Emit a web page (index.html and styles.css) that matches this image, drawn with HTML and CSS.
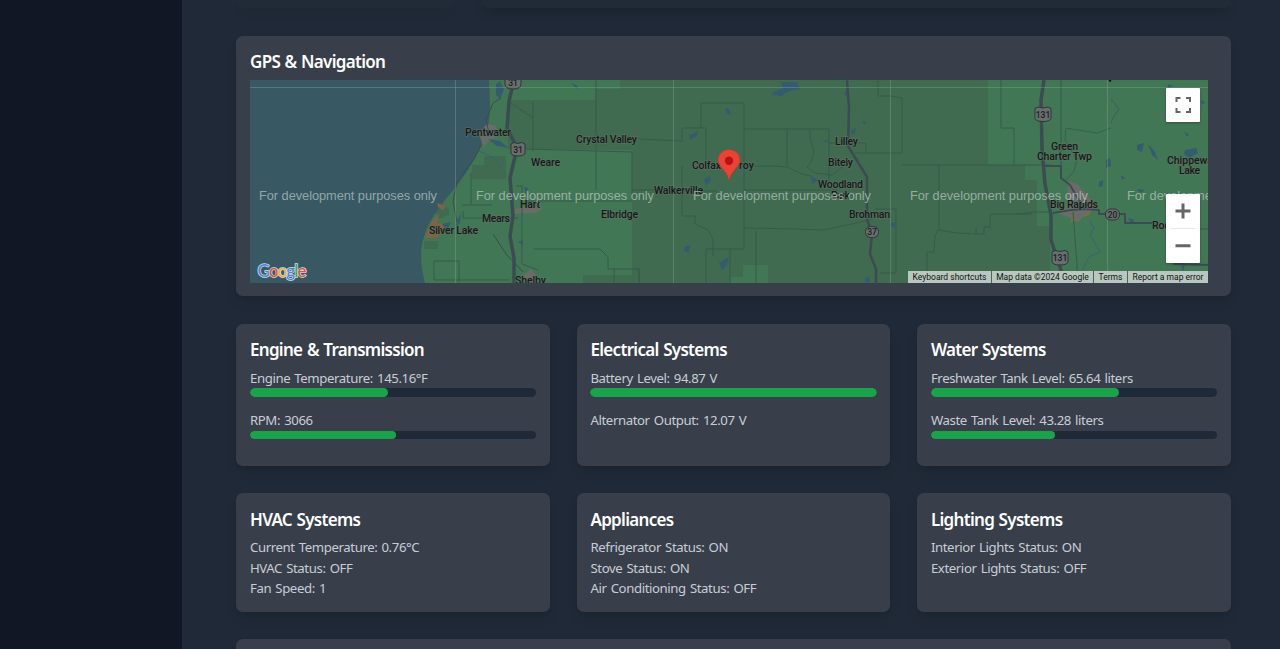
FILE: index.html
```html
<!DOCTYPE html>
<html lang="en">
<head>
<meta charset="utf-8">
<title>Vehicle Dashboard</title>
<link rel="stylesheet" href="styles.css">
</head>
<body>
<div class="app">
  <aside class="sidebar"></aside>
  <main class="main">
    <div class="top-row"><div class="stub dim"></div><div class="stub"></div></div>
    <section class="card gps">
      <h2>GPS &amp; Navigation</h2>
      <div class="map">
        <svg class="map-art" viewBox="250 80 958 203" width="958" height="203">
          <rect x="250" y="80" width="958" height="203" fill="#427755"/>
          <g fill="#406b50">
            <path d="M508 100H595V89H620V80H988V165H1025V180H1037V226H1050V283H583V275H632V150L508 149Z"/>
            <path d="M472 173V165H484V156H506V179H472ZM434 210l8-6 7 5v6l-10 4ZM424 241h14v8h-14z"/>
          </g>
          <path fill="#427755" d="M743 265H768V283H731V277H743Z"/>
          <path fill="#385963" d="M250 80H489C491 113 490 128 482 143C473 164 462 180 449 195C434 214 423 229 421 253Q421 269 425 283H250Z"/>
          <path fill="#806344" d="M437 203l9 3-3 4-5-3ZM425 238l6-16 8-8-2 9 10 2-10 13Z"/>
          <g fill="#6a6c69">
            <path d="M479 133l8-9 9 2 4 9-10 5-7 7ZM512 210l20-5 11 4-9 4-21 1ZM522 276l9-7 6 8v6h-12Z"/>
            <path d="M1068 181l9 3 9 10 11 14-10 5-9 9-10-5-11-4 10-6Z"/>
          </g>
          <path d="M1071 221l5-2m8-3l6-4" stroke="#7f6b4a" stroke-width="3"/>
          <g fill="#345c70">
            <path d="M496 84l4-3 4 8-4 10-4-4ZM488 139l12 2 9 7-12-2ZM571 83l7 3-1 3ZM773 92l10-4-2-6h16l3 7-10 2-9 5-9-1ZM689 136l9-5-1 5-7 4ZM704 179l6-3 1 5-5 5ZM725 107l4 2 2 6-4-1ZM719 263l6-4 4-2-2 8-5 5ZM685 247l5-2-1 8-5-2ZM457 221l4-8-1 10-4 4ZM442 224l9-2-4 9ZM518 242l5-2v5ZM524 187l4 1-2 6ZM846 90l4 2-3 5-3-3ZM851 130l5-2-1 5-4 2ZM862 121l4 1-2 3ZM821 142l7-2v2ZM811 176l8 4-7 4ZM891 223l4-1v6l-4-2ZM865 279l4-3 1 6-5 1Z"/>
            <path d="M1137 145l7-2-2 9-5-2ZM1148 144l7 8 3 8-6-5ZM1185 150l11-2 2 5-9 5-5-4ZM1106 160l4-2 1 8-5 2ZM1099 182l4-2v6l-4 1ZM1121 175l4 3-3 2ZM1137 189l8 1-5 3ZM1184 131l5 4-2 2ZM1128 218l7 2-4 4ZM1181 266l4-1-2 6ZM1075 277l8 1-4 3ZM1168 84l5 2-5 2ZM1201 100l4 2-3 3Z"/>
          </g>
          <g fill="none" stroke="#355c4a" stroke-width="1">
            <path d="M533 102V151M596 80V190M508 101l25 17M526 149l106 3M527 201H632V152M534 249h66l8 8v12h31v14M639 283v-14M614 269V283M522 186v78l16 6M523 186h-7M434 261V280H509M434 261h25v21M463 211V218H492M462 205h30M471 204V173M492 218h26"/>
            <path d="M638 139l44 2V128h24v38M682 166v50h13v8l13 6 5 9v17M682 191h35M632 190h54M701 128V103h43v146h-38v34M730 249v34M744 129h85M787 129v37M810 130v8l4 14-3 10-4 5 8 6 17 2 10-8M744 166h31l12 1 15 7 9 2M744 190h93M756 230V283M744 228l54 1 26 1 32-7 17-4M829 129v14h37v10M829 143v40M855 153h47V98l-11-2h-13V80M902 165h149M939 165v63l-4 8-1 16h-7v30M939 230l18 3 19 1v-6M875 209h21v64h-16M976 234h8v-7h6v-13h42M1001 80v48h13v38M1061 80v86"/>
            <path d="M1017 214l17-2h17M1073 212l4 52v19M1173 229h35"/>
          </g>
          <g fill="none" stroke="#386374">
            <path d="M1090 221l4 8-4 6 10 17-11 5-6 12-5 11"/>
            <path stroke="#37604f" d="M1066 180l8-9 3-12-12-19 1-12 12 2 19 3 14-5"/>
            <path stroke="#376060" d="M1111 123l2-5 6-9-8-10"/>
            <path d="M477 150l17 8 9 12"/>
          </g>
          <g fill="none" stroke="#3b4c50" stroke-linejoin="round">
            <path stroke-width="3.5" d="M514 80l-5 21-2 27 10 20-7 30 3 38-3 20 4 22v25"/>
            <path stroke-width="2.5" d="M847 80l2 28-1 38 19 31v42l5 15-2 20 6 15v14"/>
            <path stroke-width="3.5" d="M1044 80l-3 20 1 49 3 35 6 31v25l9 27 5 16"/>
            <path stroke-width="2" d="M1044 166h17v12l9 7 7 12 8 12 14 1v4h26v9h27M1053 213l18-3 15-1M1173 264l35 1"/>
            <path stroke-width="1" d="M489 133l-3-13 7-17 8-5M482 144l-8 15-17 23-4 20 4 20M493 234l13 20 17 18"/>
          </g>
          <path d="M250 87.500H1208M455.500 80V283M673.500 80V283M890.500 80V283M1107.500 80V283" fill="none" stroke="#87a794" stroke-opacity=".38"/>
          <g class="places">
            <text x="465" y="136" textLength="46">Pentwater</text>
            <text x="576" y="142.700" textLength="61">Crystal Valley</text>
            <text x="531" y="166.300" textLength="29">Weare</text>
            <text x="520" y="207.500" textLength="20">Hart</text>
            <text x="482" y="221.500" textLength="28">Mears</text>
            <text x="429" y="233.500" textLength="49">Silver Lake</text>
            <text x="515" y="283.500" textLength="31">Shelby</text>
            <text x="601" y="218" textLength="37">Elbridge</text>
            <text x="654" y="193.500" textLength="49">Walkerville</text>
            <text x="692" y="169" textLength="29">Colfax</text>
            <text x="739" y="169" textLength="15">roy</text>
            <text x="835" y="145.300" textLength="23">Lilley</text>
            <text x="828" y="166" textLength="25">Bitely</text>
            <text x="818" y="188.400" textLength="45">Woodland</text>
            <text x="831" y="198.500" textLength="19">Park</text>
            <text x="849" y="217.700" textLength="41">Brohman</text>
            <text x="1051" y="150" textLength="27">Green</text>
            <text x="1037" y="160" textLength="55">Charter Twp</text>
            <text x="1050" y="207.500" textLength="48">Big Rapids</text>
            <text x="1167" y="163.500" textLength="46">Chippewa</text>
            <text x="1179" y="173.500" textLength="21">Lake</text>
            <text x="1152" y="229" textLength="35">Rodney</text>
          </g>
          <path d="M1109 80l2 1" stroke="#111" stroke-width="2"/>
          <g class="shields">
            <path d="M505 78h16v6q0 5-8 5t-8-5z"/><text x="513" y="86">31</text>
            <path d="M511 144l3-1.500 4 1 4-1 3 1.500v9q-1 3-7 3t-7-3z"/><text x="518" y="153">31</text>
            <path d="M1035 108.500l3-1.500 5 1 5-1 3 1.500v10q-1 3-8 3t-8-3z"/><text x="1043" y="118">131</text>
            <path d="M1052 252l3-1.500 5 1 5-1 3 1.500v10q-1 3-8 3t-8-3z"/><text x="1060" y="261">131</text>
            <rect x="865.500" y="226.500" width="13" height="11" rx="5"/><text x="872" y="235">37</text>
            <rect x="1105.500" y="209" width="14" height="11" rx="5"/><text x="1112.500" y="218">20</text>
          </g>
          <g class="watermark">
            <text x="259" y="200" textLength="178">For development purposes only</text>
            <text x="476" y="200" textLength="178">For development purposes only</text>
            <text x="693" y="200" textLength="178">For development purposes only</text>
            <text x="910" y="200" textLength="178">For development purposes only</text>
            <text x="1127" y="200" textLength="178">For development purposes only</text>
          </g>
          <path d="M729 181c-1-6-4-9-7-13-2.500-3-4-5-4-8a11 10.500 0 0 1 22 0c0 3-1.500 5-4 8-3 4-6 7-7 13z" fill="#ea4335" stroke="#c5332a" stroke-width=".6"/>
          <circle cx="729" cy="160.700" r="4.200" fill="#b31412"/>
          <text class="google" x="257.500" y="276.500" textLength="49"><tspan fill="#4a86e0">G</tspan><tspan fill="#dd5144">o</tspan><tspan fill="#e5b53c">o</tspan><tspan fill="#4a86e0">g</tspan><tspan fill="#43a35b">l</tspan><tspan fill="#dd5144">e</tspan></text>
        </svg>
        <div class="control full"><svg width="34" height="34" viewBox="0 0 34 34" fill="none" stroke="#666" stroke-width="2"><path d="M10.500 14v-4h4M20 10h4v4M24 20v4h-4M14.500 24h-4v-4"/></svg></div>
        <div class="control zoom"><svg width="34" height="69" viewBox="0 0 34 69"><path d="M9.500 17h15M17 9.500v15M9.500 51.800h15" stroke="#666" stroke-width="3"/><path d="M4.500 34.500h25" stroke="#e6e6e6"/></svg></div>
        <div class="credits"><span style="width:83px">Keyboard shortcuts</span><span style="width:102px">Map data ©2024 Google</span><span style="width:34px">Terms</span><span style="width:81px">Report a map error</span></div>
      </div>
    </section>
    <div class="grid">
      <section class="card">
        <h2>Engine &amp; Transmission</h2>
        <p>Engine Temperature: 145.16°F</p><div class="bar"><div class="fill" style="width:48.400%"></div></div>
        <p>RPM: 3066</p><div class="bar"><div class="fill" style="width:51.100%"></div></div>
      </section>
      <section class="card">
        <h2>Electrical Systems</h2>
        <p>Battery Level: 94.87 V</p><div class="bar"><div class="fill" style="width:100%"></div></div>
        <p>Alternator Output: 12.07 V</p>
      </section>
      <section class="card">
        <h2>Water Systems</h2>
        <p>Freshwater Tank Level: 65.64 liters</p><div class="bar"><div class="fill" style="width:65.640%"></div></div>
        <p>Waste Tank Level: 43.28 liters</p><div class="bar"><div class="fill" style="width:43.280%"></div></div>
      </section>
      <section class="card">
        <h2>HVAC Systems</h2>
        <p>Current Temperature: 0.76°C</p><p>HVAC Status: OFF</p><p>Fan Speed: 1</p>
      </section>
      <section class="card">
        <h2>Appliances</h2>
        <p>Refrigerator Status: ON</p><p>Stove Status: ON</p><p>Air Conditioning Status: OFF</p>
      </section>
      <section class="card">
        <h2>Lighting Systems</h2>
        <p>Interior Lights Status: ON</p><p>Exterior Lights Status: OFF</p>
      </section>
    </div>
    <section class="card last"></section>
  </main>
</div>
</body>
</html>
```
FILE: styles.css
```css
* { box-sizing: border-box; }
body { margin: 0; background: #202937; font-family: "Noto Sans", "Open Sans", sans-serif; overflow: hidden; }
.app { display: flex; height: 649px; overflow: hidden; }
.sidebar { flex: 0 0 182px; background: #121726; }
.main { flex: 1; padding: 0 49.400px 0 54.400px; display: flex; flex-direction: column; gap: 27.200px; }
.top-row { display: flex; gap: 26px; height: 8.400px; flex: none; }
.stub { flex: 1; border-radius: 0 0 7px 7px; background: #212a37; box-shadow: 0 5px 8px -2px rgba(0,0,0,.3); }
.stub.dim { flex: 0 0 220px; box-shadow: 0 5px 8px -2px rgba(0,0,0,.08); }
.card { background: #383f4b; border-radius: 6.800px; padding: 13.600px; box-shadow: 0 8px 13px -3px rgba(0,0,0,.1), 0 3px 5px -2px rgba(0,0,0,.08); flex: none; }
.gps { height: 260.800px; }
h2 { margin: 0 0 5.800px; padding-top: 2px; color: #fff; font-size: 17px; line-height: 22.800px; font-weight: 600; letter-spacing: -0.700px; word-spacing: 0.800px; white-space: nowrap; }
p { margin: 0; color: #c8cdd5; font-size: 13.200px; line-height: 20.400px; letter-spacing: -0.400px; word-spacing: 1.100px; white-space: nowrap; }
.grid { display: grid; grid-template-columns: repeat(3, 1fr); gap: 26.900px 27.200px; flex: none; }
.bar { height: 8.400px; border-radius: 5px; background: #202937; margin-bottom: 13.600px; overflow: hidden; }
.fill { height: 100%; border-radius: 5px; background: #1aa34a; }
.last { height: 60px; }
.map { position: relative; width: 958px; height: 203px; overflow: hidden; }
.map-art { display: block; }
.places { font: 500 10.500px Roboto, sans-serif; fill: #151a18; stroke: #617068; stroke-width: 1.600px; stroke-opacity: .65; paint-order: stroke; }
.shields path, .shields rect { fill: #686e6d; stroke: #303537; }
.shields text { font: 500 8.500px Roboto, sans-serif; fill: #191d1e; text-anchor: middle; }
.watermark { font: 12.800px "Liberation Sans", sans-serif; fill: #c7d3cf; fill-opacity: .65; }
.google { font: 500 17px Lato, sans-serif; stroke: #d4dddf; stroke-width: 1.500px; paint-order: stroke; }
.control { position: absolute; right: 8px; width: 34px; background: #fff; border-radius: 1px; box-shadow: 0 1px 3px rgba(0,0,0,.3); }
.control svg { display: block; }
.full { top: 8px; height: 34px; }
.zoom { top: 114px; height: 69px; }
.credits { position: absolute; right: 0; bottom: 0; height: 12px; display: flex; color: #111; font: 8.500px/12px Roboto, sans-serif; }
.credits span { background: #b9c8bf; text-align: center; white-space: nowrap; }
.credits span + span { border-left: 1px solid #4d6557; }
```
